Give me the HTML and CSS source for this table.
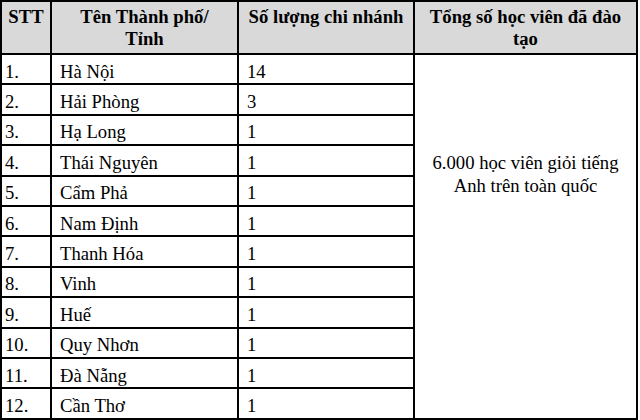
FILE: index.html
```html
<!DOCTYPE html>
<html lang="vi">
<head>
<meta charset="utf-8">
<link rel="stylesheet" href="styles.css">
</head>
<body>
<table class="branches">
  <colgroup>
    <col class="c-stt">
    <col class="c-city">
    <col class="c-count">
    <col class="c-total">
  </colgroup>
  <thead>
    <tr class="head-row">
      <th>STT</th>
      <th>Tên Thành phố/<br>Tỉnh</th>
      <th>Số lượng chi nhánh</th>
      <th>Tổng số học viên đã đào<br>tạo</th>
    </tr>
  </thead>
  <tbody>
    <tr><td class="stt">1.</td><td class="txt">Hà Nội</td><td class="txt">14</td><td class="total" rowspan="12">6.000 học viên giỏi tiếng<br>Anh trên toàn quốc</td></tr>
    <tr><td class="stt">2.</td><td class="txt">Hải Phòng</td><td class="txt">3</td></tr>
    <tr><td class="stt">3.</td><td class="txt">Hạ Long</td><td class="txt">1</td></tr>
    <tr><td class="stt">4.</td><td class="txt">Thái Nguyên</td><td class="txt">1</td></tr>
    <tr><td class="stt">5.</td><td class="txt">Cẩm Phả</td><td class="txt">1</td></tr>
    <tr><td class="stt">6.</td><td class="txt">Nam Định</td><td class="txt">1</td></tr>
    <tr><td class="stt">7.</td><td class="txt">Thanh Hóa</td><td class="txt">1</td></tr>
    <tr><td class="stt">8.</td><td class="txt">Vinh</td><td class="txt">1</td></tr>
    <tr><td class="stt">9.</td><td class="txt">Huế</td><td class="txt">1</td></tr>
    <tr><td class="stt">10.</td><td class="txt">Quy Nhơn</td><td class="txt">1</td></tr>
    <tr><td class="stt">11.</td><td class="txt">Đà Nẵng</td><td class="txt">1</td></tr>
    <tr><td class="stt">12.</td><td class="txt">Cần Thơ</td><td class="txt">1</td></tr>
  </tbody>
</table>
</body>
</html>
```
FILE: styles.css
```css
html, body {
  margin: 0;
  padding: 0;
  background: #ffffff;
}

.branches {
  border-collapse: collapse;
  table-layout: fixed;
  width: 638px;
  font-family: "Liberation Serif", "Times New Roman", serif;
  font-size: 18.67px;
  color: #000;
}

.c-stt { width: 50px; }
.c-city { width: 187px; }
.c-count { width: 176px; }
.c-total { width: 223px; }

.branches th,
.branches td {
  border: 2px solid #000;
}

.head-row {
  height: 53px;
}

.branches th {
  background: #d9d9d9;
  font-weight: bold;
  text-align: center;
  vertical-align: top;
  line-height: 22px;
  padding: 4px 4px 0;
}

.branches tbody tr {
  height: 30.4px;
}

.branches td {
  line-height: 21px;
  vertical-align: middle;
  padding: 4px 8px 0;
  white-space: nowrap;
}

.branches td.stt {
  padding-left: 3px;
  padding-right: 2px;
}

.branches td.total {
  text-align: center;
  vertical-align: top;
  line-height: 23px;
  padding: 96px 4px 0;
}
```
